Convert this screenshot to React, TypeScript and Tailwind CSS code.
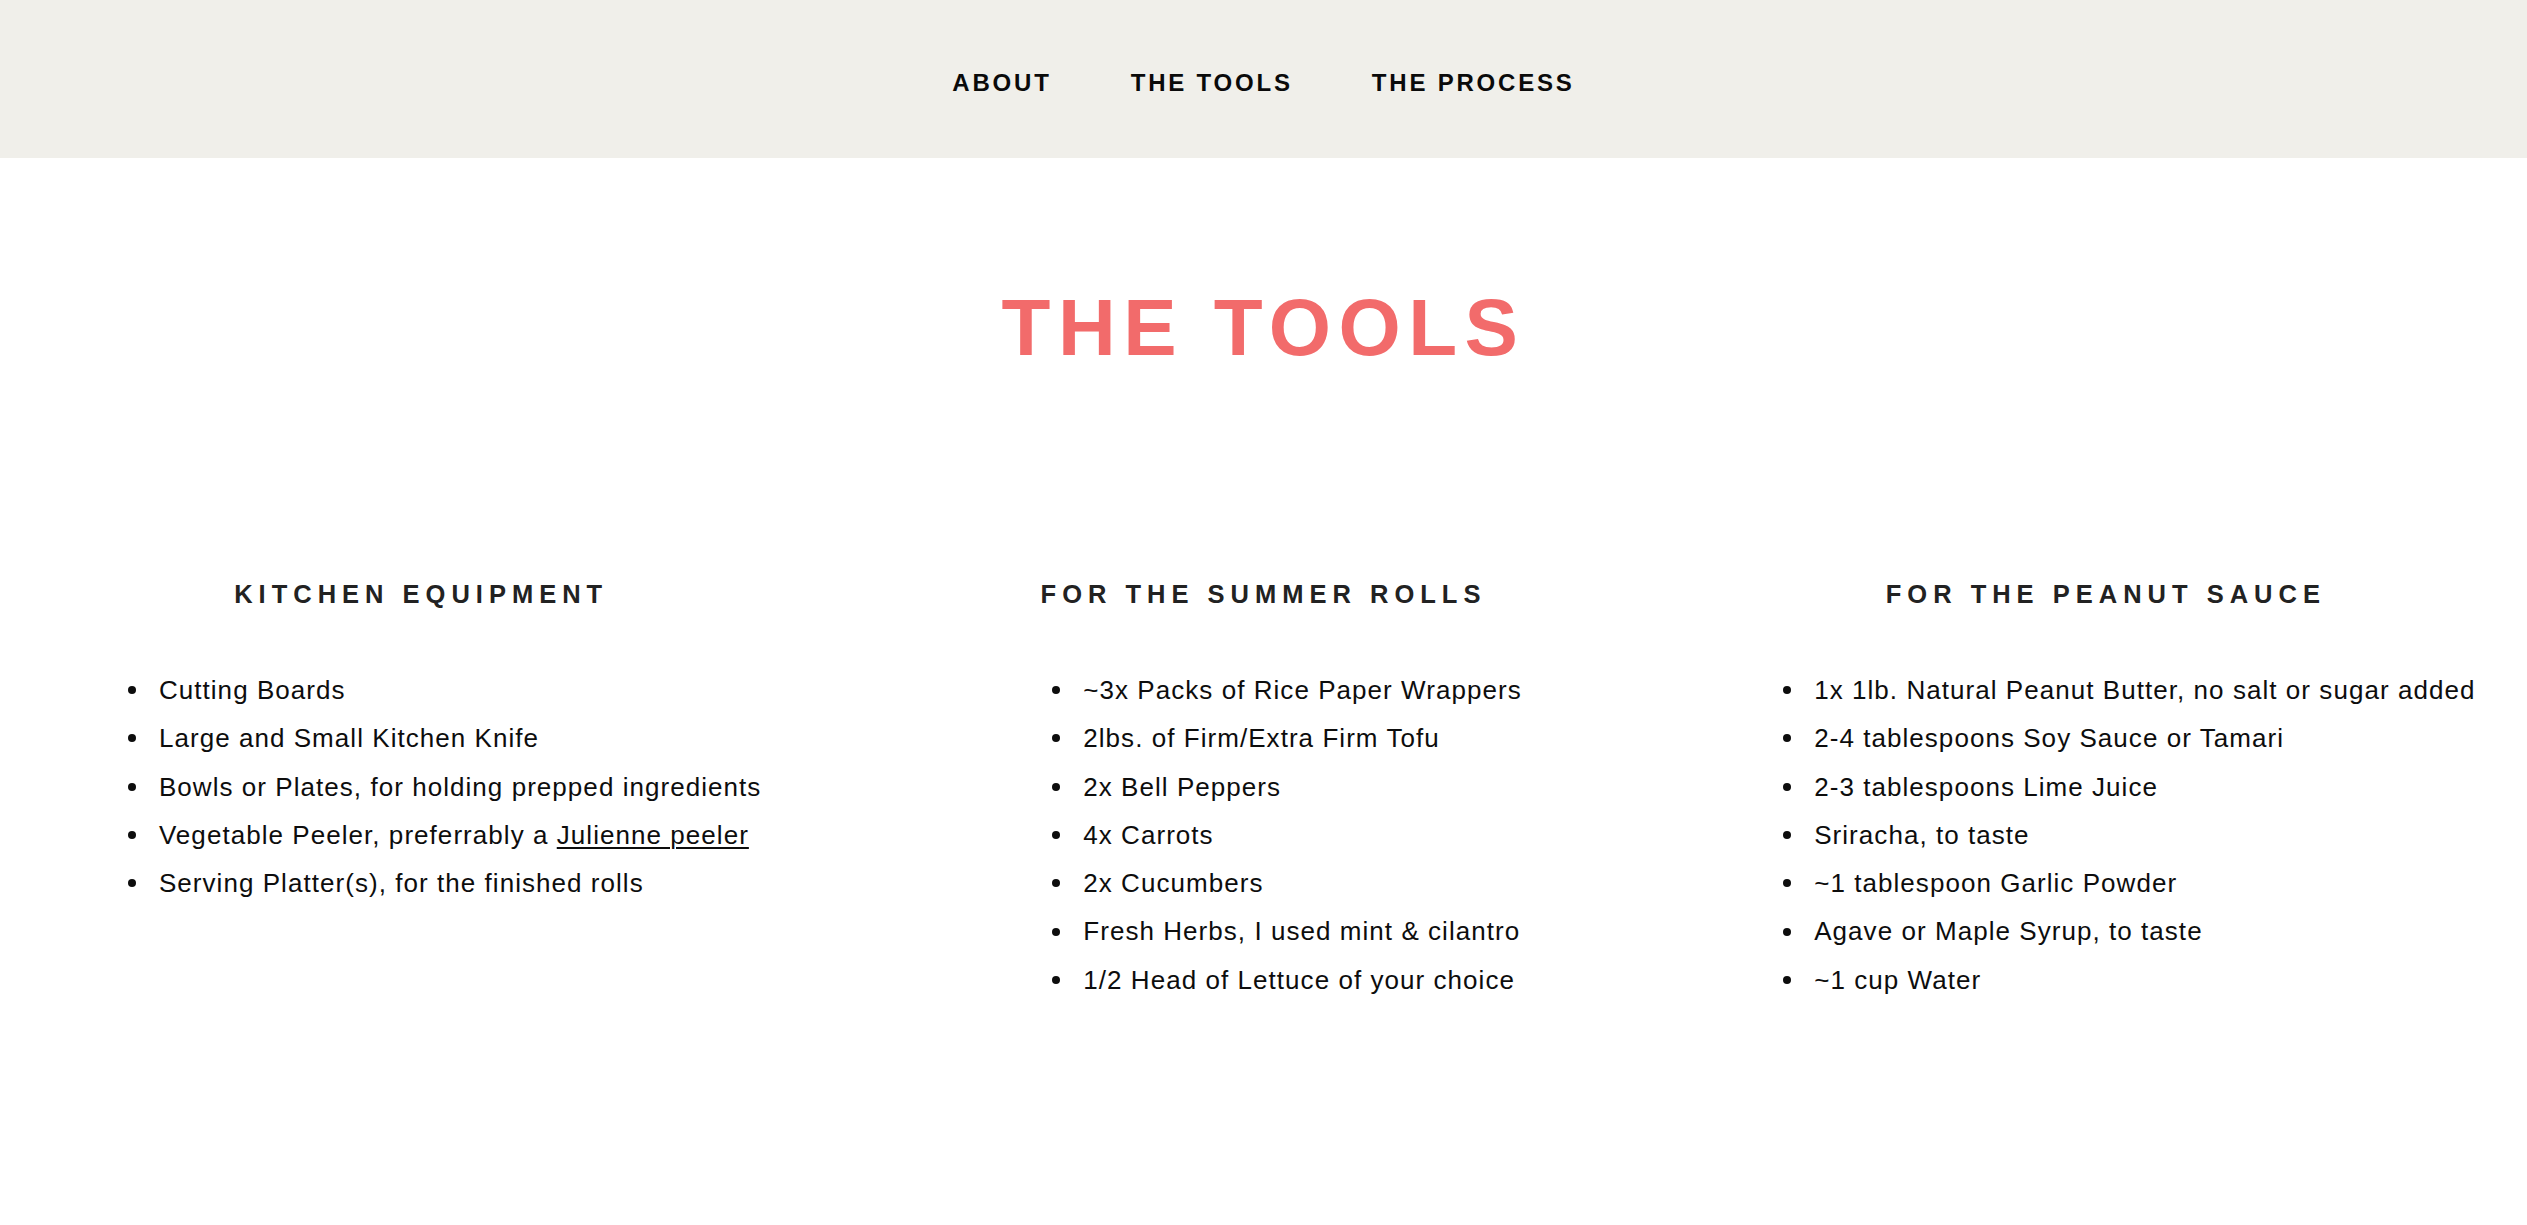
const navLinks = ['About', 'The Tools', 'The Process'];

interface ToolList {
    title: string;
    items: React.ReactNode[];
}

const lists: ToolList[] = [
    {
        title: 'Kitchen Equipment',
        items: [
            'Cutting Boards',
            'Large and Small Kitchen Knife',
            'Bowls or Plates, for holding prepped ingredients',
            <>Vegetable Peeler, preferrably a <a href="#" className="underline underline-offset-[3px] decoration-[1.5px]">Julienne peeler</a></>,
            'Serving Platter(s), for the finished rolls',
        ],
    },
    {
        title: 'For the Summer Rolls',
        items: [
            '~3x Packs of Rice Paper Wrappers',
            '2lbs. of Firm/Extra Firm Tofu',
            '2x Bell Peppers',
            '4x Carrots',
            '2x Cucumbers',
            'Fresh Herbs, I used mint & cilantro',
            '1/2 Head of Lettuce of your choice',
        ],
    },
    {
        title: 'For the Peanut Sauce',
        items: [
            '1x 1lb. Natural Peanut Butter, no salt or sugar added',
            '2-4 tablespoons Soy Sauce or Tamari',
            '2-3 tablespoons Lime Juice',
            'Sriracha, to taste',
            '~1 tablespoon Garlic Powder',
            'Agave or Maple Syrup, to taste',
            '~1 cup Water',
        ],
    },
];

function Nav() {
    return (
        <nav className="h-[158px] bg-[#f0efea] flex justify-center pt-[71px]">
            <ul className="flex gap-[79px]">
                {navLinks.map(link => (
                    <li key={link}>
                        <a href="#" className="block text-[24px] leading-[24px] font-bold uppercase tracking-[2.8px] text-[#0a0a0a]">{link}</a>
                    </li>
                ))}
            </ul>
        </nav>
    );
}

function Column(props: ToolList) {
    return (
        <div className="flex flex-col items-center">
            <h3 className="text-[25.5px] leading-[26px] font-bold uppercase tracking-[6px] text-[#222222]">{props.title}</h3>
            <ul className="mt-[59px] pl-[47px]">
                {props.items.map((item, i) => (
                    <li key={i} className="flex items-center gap-[23px] text-[26px] leading-[48.3px] tracking-[1.05px] text-[#0d0d0d]">
                        <span className="w-2 h-2 rounded-full bg-[#0d0d0d] shrink-0"></span>
                        <span>{item}</span>
                    </li>
                ))}
            </ul>
        </div>
    );
}

export default function App() {
    return (
        <div className="min-h-screen bg-white font-['Liberation_Sans',Arial,sans-serif]">
            <Nav />
            <main>
                <h1 className="mt-[130px] text-center text-[80px] leading-[80px] font-bold uppercase tracking-[7.5px] text-[#f26b6b]">The Tools</h1>
                <section className="mt-[213px] grid grid-cols-3">
                    {lists.map(list => (
                        <Column key={list.title} title={list.title} items={list.items} />
                    ))}
                </section>
            </main>
        </div>
    );
}
